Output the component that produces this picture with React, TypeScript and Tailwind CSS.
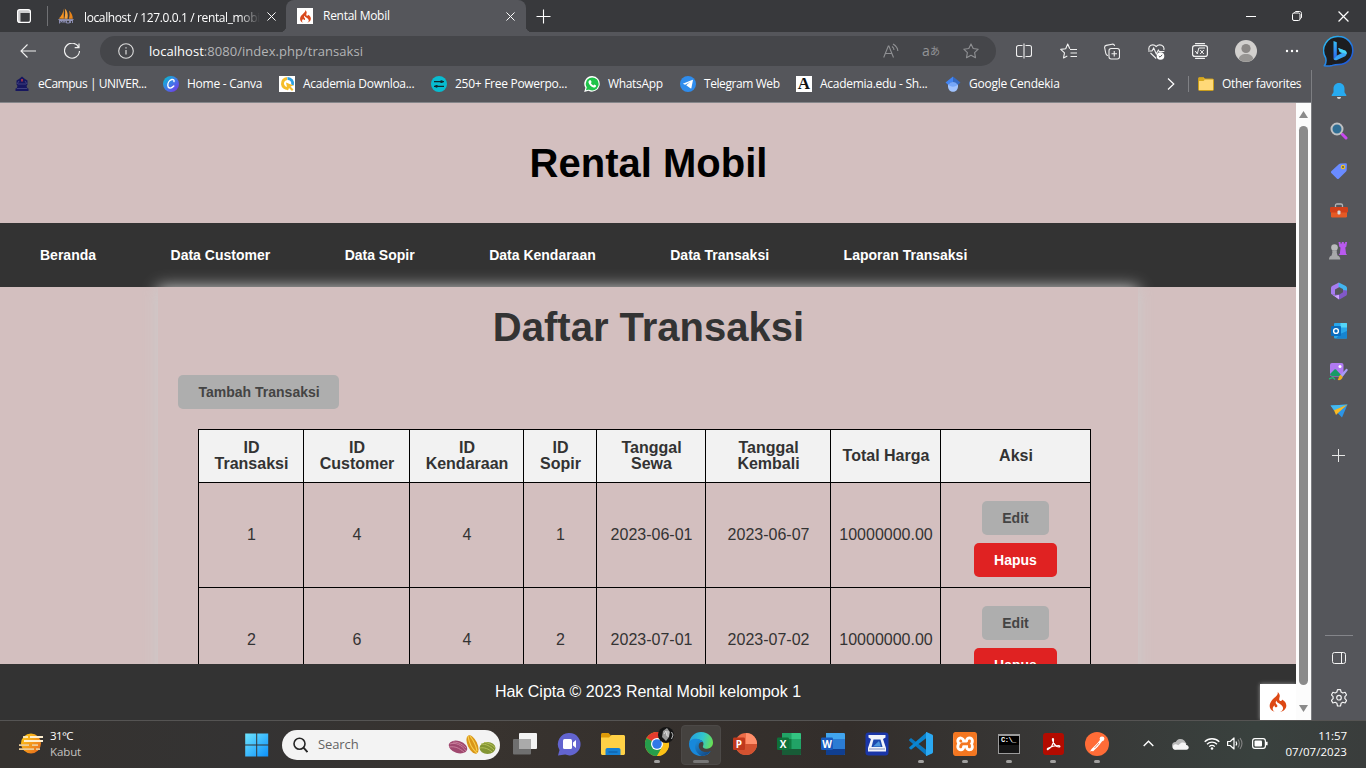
import React from "react";
import { SiCodeigniter, SiXampp } from "react-icons/si";

type SvgProps = { w?: number; h?: number; box?: string; className?: string; children: React.ReactNode };

function Svg({ w = 20, h, box, className = "", children }: SvgProps) {
  const hh = h ?? w;
  return (
    <svg width={w} height={hh} viewBox={box ?? `0 0 ${w} ${hh}`} fill="none" className={`block shrink-0 ${className}`}>
      {children}
    </svg>
  );
}

function CloseIcon({ size = 9 }: { size?: number }) {
  return (
    <Svg w={size} box="0 0 10 10">
      <path d="M.5.5l9 9M9.5.5l-9 9" stroke="#fff" strokeWidth="1.1" />
    </Svg>
  );
}

function PmaIcon() {
  return (
    <Svg w={16}>
      <path d="M5.800.500C5.500 4 3.500 8 .8 10.500l5 .2z" fill="#f6921e" />
      <path d="M6.800.500c2.700 2.500 3.500 6 2.700 10.200H6.300c.9-3 1.200-6.500.5-10.200z" fill="#f6a23c" />
      <path d="M11 2.500c2.500 2 3.700 5 3.800 8.200h-4c1-2.500 1-5.200.2-8.200z" fill="#e8841a" />
      <path d="M0 11.200h16l-1.600 1.600H1.500z" fill="#a4a6c8" />
      <path d="M1.500 15.500v-3h2v1.500h-2M5 15v-2.500l1 1.200 1-1.200V15M8.500 12.500v2.500h3v-2.500M12.500 15v-2.500h2V15" stroke="#9a9cc8" strokeWidth=".8" />
    </Svg>
  );
}

/* ------------------------------ tab strip ------------------------------ */

function TabStrip() {
  return (
    <div className="flex h-8 shrink-0 items-stretch bg-[#38393c] text-white">
      <div className="flex w-[47px] items-center justify-center">
        <Svg w={14} h={14}>
          <rect x=".6" y=".6" width="12.800" height="12.800" rx="2.200" stroke="#fff" strokeWidth="1.200" />
          <path d="M1 1h12v3H1zM1 4h2.500v9H1z" fill="#fff" fillOpacity=".75" />
        </Svg>
      </div>
      <div className="my-[6px] w-px bg-[#707174]" />
      <div className="flex w-[238px] items-center pl-[10px]">
        <PmaIcon />
        <div className="ml-[10px] w-[176px] overflow-hidden whitespace-nowrap [mask-image:linear-gradient(to_right,black_88%,transparent)]">
          <span className="text-[12px] tracking-[-0.38px]">localhost / 127.0.0.1 / rental_mobil</span>
        </div>
        <div className="ml-[7px]"><CloseIcon /></div>
      </div>
      <div className="relative flex w-[240px] items-center rounded-t-[8px] bg-[#55565b] pl-[11px]">
        <div className="flex size-4 items-center justify-center bg-white">
          <SiCodeigniter size={13} color="#d9481c" />
        </div>
        <span className="ml-[10px] flex-1 text-[12px] tracking-[-0.28px]">Rental Mobil</span>
        <div className="mr-[11px]"><CloseIcon /></div>
        <div className="absolute bottom-0 -left-[6px] size-[6px] bg-[radial-gradient(circle_at_0_0,transparent_6px,#55565b_6.5px)]" />
        <div className="absolute bottom-0 -right-[6px] size-[6px] bg-[radial-gradient(circle_at_100%_0,transparent_6px,#55565b_6.5px)]" />
      </div>
      <div className="ml-[10px] flex items-center">
        <Svg w={15}><path d="M7.500.500v14M.500 7.500h14" stroke="#fff" strokeWidth="1.100" /></Svg>
      </div>
      <div className="ml-auto flex">
        <div className="flex w-[46px] items-center justify-center"><Svg w={10}><path d="M0 5.500h10" stroke="#fff" /></Svg></div>
        <div className="flex w-[46px] items-center justify-center">
          <Svg w={10}>
            <rect x=".5" y="2" width="7.500" height="7.500" rx="1.500" stroke="#fff" />
            <path d="M2.500 2C2.600 1 3.200.500 4 .500h3.500c1.300 0 2 .700 2 2V6c0 .900-.500 1.400-1.300 1.500" stroke="#fff" />
          </Svg>
        </div>
        <div className="flex w-[46px] items-center justify-center"><CloseIcon size={11} /></div>
      </div>
    </div>
  );
}

/* ------------------------------- toolbar ------------------------------- */

const STAR = "M8 .900l2.200 4.600 5 .700-3.600 3.500.900 5L8 12.300l-4.500 2.400.900-5L.800 6.200l5-.700z";

function Toolbar() {
  return (
    <div className="flex h-[38px] shrink-0 items-center text-white">
      <div className="flex w-14 justify-center">
        <Svg w={16}><path d="M16 8H1M7.500 1.500L1 8l6.500 6.500" stroke="#f0f0f0" strokeWidth="1.100" /></Svg>
      </div>
      <div className="flex w-8 justify-center">
        <Svg w={16}><path d="M14.800 4.500A7.500 7.500 0 1 0 15.500 8M15 .500v4.200h-4.300" stroke="#f0f0f0" strokeWidth="1.200" /></Svg>
      </div>
      <div className="ml-3 flex h-[30px] w-[896px] items-center rounded-full bg-[#45464a] pr-[5px] pl-[18px]">
        <Svg w={16}>
          <circle cx="8" cy="8" r="7.300" stroke="#dcdcdc" strokeWidth="1.100" />
          <path d="M8 7v4.500M8 4.200v1.400" stroke="#dcdcdc" strokeWidth="1.200" />
        </Svg>
        <span className="ml-[15px] flex-1 pt-px text-[13px] tracking-[0.04px] text-[#b4b5b7]">
          <span className="text-white">localhost</span>:8080/index.php/transaksi
        </span>
        <div className="flex w-10 justify-center">
          <Svg w={16}>
            <path d="M.700 14.500L5.300 3h.600l4.600 11.500M2.300 10.500h6.600" stroke="#8f9093" strokeWidth="1.100" />
            <path d="M9 3.500c1.300.800 2 2 2 3.500M10 1c2.500 1.500 4.800 3.500 4.800 7" stroke="#8f9093" strokeWidth="1.100" />
          </Svg>
        </div>
        <div className="flex w-10 justify-center text-[12px] leading-4 text-[#939497]">
          <span className="text-[14px]">a</span><span className="font-['Noto_Sans_CJK_JP',sans-serif] text-[10px]">あ</span>
        </div>
        <div className="flex w-10 justify-center"><Svg w={16}><path d={STAR} stroke="#8f9093" strokeWidth="1.100" strokeLinejoin="round" /></Svg></div>
      </div>
      <div className="ml-[6px] flex [&>div]:flex [&>div]:h-6 [&>div]:w-11 [&>div]:items-center [&>div]:justify-center">
        <div>
          <Svg w={16}>
            <path d="M6.500 2.500h-4a2 2 0 0 0-2 2v7a2 2 0 0 0 2 2h4M9.500 2.500h4a2 2 0 0 1 2 2v7a2 2 0 0 1-2 2h-4M8 .500v15" stroke="#f0f0f0" strokeWidth="1.100" />
          </Svg>
        </div>
        <div>
          <Svg w={17} h={16}>
            <path d="M9.800 5.800L7.700 1 5.700 5.700l-5 .700 3.800 3.500-1 5 3.800-2M10 6.500h7M10.500 10h6.500M10.500 13.500h6.500" stroke="#f0f0f0" strokeWidth="1.100" strokeLinejoin="round" />
          </Svg>
        </div>
        <div>
          <Svg w={16} h={17}>
            <path d="M4 12.500C2.500 12.500 2 11.500 1.700 10L.700 5c-.300-1.500.300-2.300 1.600-2.600L8 1.200c1.500-.300 2.300.300 2.600 1.600" stroke="#f0f0f0" strokeWidth="1.100" />
            <rect x="5" y="5.500" width="10.500" height="10.500" rx="2.200" stroke="#f0f0f0" strokeWidth="1.100" />
            <path d="M10.250 8v5.500M7.500 10.750h5.500" stroke="#f0f0f0" strokeWidth="1.100" />
          </Svg>
        </div>
        <div>
          <Svg w={17} h={17}>
            <path d="M1 7C-.200 2.500 5 .200 8.200 3.500 11.500.200 17 2.500 15.800 7M2.500 10l5.700 5.500" stroke="#f0f0f0" strokeWidth="1.100" />
            <path d="M0 8h4l1.700-3 2.600 6 2-4 1 1.500h5" stroke="#f0f0f0" strokeWidth="1.100" />
            <circle cx="12.500" cy="13" r="3.800" fill="#fff" />
            <path d="M10.800 13l1.200 1.200 2.200-2.400" stroke="#55565b" strokeWidth="1" />
          </Svg>
        </div>
        <div>
          <Svg w={16}>
            <path d="M3.500.700h9M3.500 15.300h9" stroke="#f0f0f0" strokeWidth="1.200" strokeLinecap="round" />
            <rect x=".6" y="2.600" width="14.800" height="10.800" rx="2.200" stroke="#f0f0f0" strokeWidth="1.200" />
            <path d="M3 8.500l1 .2 1.300 2.300L6.800 5H13M8.200 7l3.600 4M11.800 7l-3.600 4" stroke="#f0f0f0" />
          </Svg>
        </div>
        <div className="pl-[3px]">
          <Svg w={22}>
            <circle cx="11" cy="11" r="11" fill="#d2d0ce" />
            <circle cx="11" cy="8.500" r="4.600" fill="#8b8886" />
            <path d="M3.800 19c.300-3 3-5 7.200-5s6.900 2 7.200 5C14 22.800 8 22.800 3.800 19z" fill="#979593" />
          </Svg>
        </div>
        <div className="pl-[8px]">
          <Svg w={14} h={4}><circle cx="2" cy="2" r="1.200" fill="#fff" /><circle cx="7" cy="2" r="1.200" fill="#fff" /><circle cx="12" cy="2" r="1.200" fill="#fff" /></Svg>
        </div>
      </div>
    </div>
  );
}

/* ---------------------------- favorites bar ---------------------------- */

const favorites: { label: string; box: string; track: string; icon: React.ReactNode }[] = [
  {
    label: "eCampus | UNIVER...", box: "w-[149px]", track: "tracking-[-0.46px]",
    icon: (
      <Svg w={16}>
        <path d="M8 .5l3 2.500 2.500 1.500v4l-1 1.500 1 2.500h1V15h-13v-2.500h1l1-2.500-1-1.500v-4L5 3z" fill="#17175f" />
        <path d="M4 8h8M3 12.500h10M5 5l-2 3M11 5l2 3" stroke="#4b4c86" strokeWidth=".8" />
        <path d="M8 3v2.500" stroke="#c23b45" strokeWidth="1.500" />
      </Svg>
    ),
  },
  {
    label: "Home - Canva", box: "w-[116px]", track: "tracking-[-0.26px]",
    icon: (
      <Svg w={16}>
        <defs><linearGradient id="cv" x1="0" y1="0" x2="1" y2="1"><stop stopColor="#00c4cc" /><stop offset=".5" stopColor="#3f7be8" /><stop offset="1" stopColor="#7d2ae8" /></linearGradient></defs>
        <circle cx="8" cy="8" r="8" fill="url(#cv)" />
        <path d="M11 5.600c.4-1.600-.8-2.400-2.200-2.100C6.300 4.100 4.700 7 4.800 9.500c.1 2.900 3 3.700 6 .6" stroke="#fff" strokeWidth="1.400" strokeLinecap="round" />
      </Svg>
    ),
  },
  {
    label: "Academia Downloa...", box: "w-[152px]", track: "tracking-[-0.3px]",
    icon: (
      <Svg w={16}>
        <path d="M0 0h16v16H0z" fill="#fff" />
        <path d="M9 12.500A5 5 0 1 1 8 2.500" stroke="#f5bd2a" strokeWidth="3" />
        <path d="M8.500 2.500a5 5 0 0 1 5 6.500" stroke="#2a9fe0" strokeWidth="2.800" />
        <path d="M7 6.500l7.500 3-3 1 3 3-1.500 1.500-3-3-1.200 2.700z" fill="#f5bd2a" />
      </Svg>
    ),
  },
  {
    label: "250+ Free Powerpo...", box: "w-[153px]", track: "tracking-[-0.28px]",
    icon: (
      <Svg w={16}>
        <circle cx="8" cy="8" r="8" fill="#08bcd0" />
        <path d="M3 5.700h10M3 10.300h10" stroke="#10282c" strokeWidth="1.300" />
        <circle cx="10.500" cy="5.700" r="1.400" fill="#10282c" /><circle cx="5.500" cy="10.300" r="1.400" fill="#10282c" />
      </Svg>
    ),
  },
  {
    label: "WhatsApp", box: "w-[96px]", track: "tracking-[-0.33px]",
    icon: (
      <Svg w={16}>
        <path d="M8.200 0a7.800 7.800 0 1 1-3.700 14.800L.200 16l1.200-4.200A7.800 7.800 0 0 1 8.200 0z" fill="#fff" />
        <circle cx="8.200" cy="7.900" r="6.500" fill="#1fc34a" /><path d="M1.900 14.300l1-3.300 2.400 2.400z" fill="#1fc34a" />
        <path d="M5.700 4.200l1.100.1.800 1.800-.7 1.100c.6 1.100 1.400 1.800 2.500 2.300l.9-1 1.800.9c.1 1.600-1.300 2.300-2.600 2C7 10.800 5 8.700 4.500 6.500c-.2-1 .4-2 1.200-2.300z" fill="#fff" />
      </Svg>
    ),
  },
  {
    label: "Telegram Web", box: "w-[116px]", track: "tracking-[-0.42px]",
    icon: (
      <Svg w={16}>
        <circle cx="8" cy="8" r="8" fill="#2f8cec" />
        <path d="M2.800 7.800l9.300-3.900c.6-.2.900.1.800.7l-1.500 7.300c-.1.500-.5.700-1 .4L6.200 9.200l4.100-3.500-5.200 3z" fill="#fff" />
      </Svg>
    ),
  },
  {
    label: "Academia.edu - Sh...", box: "w-[149px]", track: "tracking-[-0.28px]",
    icon: (
      <div className="flex size-4 items-center justify-center bg-white font-['Liberation_Serif',serif] text-[17px] leading-4 font-bold text-[#111]">A</div>
    ),
  },
  {
    label: "Google Cendekia", box: "w-[120px]", track: "tracking-[-0.25px]",
    icon: (
      <Svg w={16}>
        <path d="M3 8h10v2.500c-.2 3.300-2.300 5.300-5 5.300s-4.800-2-5-5.300z" fill="#a0c3ff" />
        <path d="M8 .500L.500 6.500 3.300 9C4.300 7.200 6 6.300 8 6.300z" fill="#4285f4" />
        <path d="M8 .500l7.500 6L12.700 9C11.700 7.200 10 6.300 8 6.300z" fill="#356ac3" />
        <path d="M3.300 9a5.200 5.200 0 0 1 9.400 0 8 8 0 0 1-9.400 0z" fill="#76a7fa" />
      </Svg>
    ),
  },
];

function FavoritesBar() {
  return (
    <div className="flex h-[33px] shrink-0 items-center border-b border-[#85868a] pb-1 pl-[14px] text-[12px] whitespace-nowrap text-white">
      {favorites.map((f) => (
        <div key={f.label} className={`flex shrink-0 items-center gap-2 ${f.box}`}>
          {f.icon}
          <span className={f.track}>{f.label}</span>
        </div>
      ))}
      <div className="ml-auto flex items-center pr-[10px]">
        <Svg w={8} h={12}><path d="M1 .500L6.800 6 1 11.500" stroke="#fff" strokeWidth="1.200" /></Svg>
        <div className="ml-[13px] h-4 w-px bg-[#808185]" />
        <div className="ml-[9px]">
          <Svg w={16} h={14}>
            <path d="M.500 1.500C.500.900.900.500 1.500.500h4L7 2h7.500c.600 0 1 .400 1 1v9.500c0 .600-.400 1-1 1h-13c-.600 0-1-.400-1-1z" fill="#ffd978" stroke="#c99d1c" />
            <path d="M1 1h4.500L7 2.500 5.500 4H1z" fill="#d6a81f" />
          </Svg>
        </div>
        <span className="ml-2 w-[79px] tracking-[-0.34px]">Other favorites</span>
      </div>
    </div>
  );
}

/* -------------------------------- page --------------------------------- */

const menu = ["Beranda", "Data Customer", "Data Sopir", "Data Kendaraan", "Data Transaksi", "Laporan Transaksi"];
const columns = ["ID Transaksi", "ID Customer", "ID Kendaraan", "ID Sopir", "Tanggal Sewa", "Tanggal Kembali", "Total Harga", "Aksi"];
const widths = ["w-[105px]", "w-[106px]", "w-[114px]", "w-[73px]", "w-[109px]", "w-[125px]", "w-[110px]", "w-[150px]"];
const rows = [
  ["1", "4", "4", "1", "2023-06-01", "2023-06-07", "10000000.00"],
  ["2", "6", "4", "2", "2023-07-01", "2023-07-02", "10000000.00"],
];

const BTN = "rounded-[5px] py-[10px] text-[14px] leading-[14px] font-bold";

function WebPage() {
  return (
    <div className="relative h-full w-[1296px] overflow-hidden bg-[#d3bfbf] font-['Liberation_Sans',Arial,sans-serif] text-[#333]">
      <header className="py-10 text-center">
        <h1 className="pl-px text-[40px] leading-10 font-bold text-black">Rental Mobil</h1>
      </header>
      <nav className="flex h-16 items-center gap-[74.5px] bg-[#333] pl-10 text-[14px] font-bold whitespace-nowrap text-white">
        {menu.map((m) => <a key={m}>{m}</a>)}
      </nav>
      <main className="mx-auto w-[980px] p-5 shadow-[0_0_15px_#ccc]">
        <h1 className="pl-px text-center text-[40px] leading-10 font-bold">Daftar Transaksi</h1>
        <button className={`mt-7 block bg-[#aeaeae] pr-[19.5px] pl-[20.5px] text-[#444] ${BTN}`}>Tambah Transaksi</button>
        <table className="mt-5 ml-5 w-[893px] table-fixed border-collapse text-center text-[16px] leading-4">
          <colgroup>{widths.map((w, i) => <col key={i} className={w} />)}</colgroup>
          <thead>
            <tr className="h-[53px] bg-[#f2f2f2]">
              {columns.map((c) => <th key={c} className="border border-black py-[10px] pr-[7px] pl-2">{c}</th>)}
            </tr>
          </thead>
          <tbody>
            {rows.map((r) => (
              <tr key={r[0]} className="h-[105px]">
                {r.map((c, i) => <td key={i} className="border border-black pl-px">{c}</td>)}
                <td className="border border-black pt-2">
                  <div className="flex flex-col items-center gap-2">
                    <button className={`bg-[#aeaeae] px-5 text-[#444] ${BTN}`}>Edit</button>
                    <button className={`bg-[#e02222] px-5 text-white ${BTN}`}>Hapus</button>
                  </div>
                </td>
              </tr>
            ))}
          </tbody>
        </table>
      </main>
      <footer className="absolute inset-x-0 bottom-0 flex h-14 items-center justify-center bg-[#333] text-[16px] text-white">
        <p>Hak Cipta © 2023 Rental Mobil kelompok 1</p>
      </footer>
      <div className="absolute right-0 bottom-0 flex size-9 items-center justify-center bg-white shadow-[0_0_4px_#999]">
        <SiCodeigniter size={20} color="#dd4814" />
      </div>
    </div>
  );
}

function Scrollbar() {
  return (
    <div className="flex w-[15px] flex-col items-center bg-[#fcfcfc]">
      <Svg w={9} h={7} className="mt-2"><path d="M4.500 0L9 7H0z" fill="#8b8b8b" /></Svg>
      <div className="mt-2 h-[559px] w-[9px] rounded-full bg-[#8b8b8b]" />
      <Svg w={9} h={7} className="mt-[20px]"><path d="M4.500 7L9 0H0z" fill="#8b8b8b" /></Svg>
    </div>
  );
}

/* ------------------------------- sidebar ------------------------------- */

function Sidebar() {
  return (
    <aside className="flex w-[55px] shrink-0 flex-col bg-[#55565b]">
      <div className="flex h-[38px] items-center justify-center">
        <Svg w={31} h={32}>
          <defs>
            <linearGradient id="bg1" x1="0" y1="0" x2="1" y2="1"><stop stopColor="#2dc0f0" /><stop offset="1" stopColor="#1d4ad8" /></linearGradient>
            <linearGradient id="bg2" x1="0" y1="0" x2="0" y2="1"><stop stopColor="#37bdf5" /><stop offset="1" stopColor="#2a62f0" /></linearGradient>
          </defs>
          <path d="M15.800 1.500a14 14 0 0 1 0 28c-2.500 0-4 .200-6.500.900-2.500.500-5.500.700-8 .400 1.700-2 2.200-4.500 1.400-8A14 14 0 0 1 15.800 1.500z" fill="#1c1d20" stroke="url(#bg1)" strokeWidth="1.500" strokeLinejoin="round" />
          <path d="M10.500 6l3.300 1.300v14l-3.300 2.700z" fill="url(#bg2)" />
          <path d="M10.500 24l3.500-3.500 5-2.600-2.200-1-1.600-4 7.300 2.800c1.700 1.600 1.500 4.300-.3 5.500L14 25c-1.500.6-2.700.2-3.500-1z" fill="#39a4f5" />
          <path d="M15.200 12.900l7.300 2.800c1 1 1.400 2 1.100 3.300l-6.800-2.100z" fill="#48d5f5" />
        </Svg>
      </div>
      <div className="flex flex-1 flex-col items-center border-l border-[#7d7e82] pt-[1px] pr-px [&>div]:flex [&>div]:h-10 [&>div]:w-full [&>div]:shrink-0 [&>div]:items-center [&>div]:justify-center">
        <div>
          <Svg w={16} h={18}>
            <path d="M8 1c3.500 0 5.500 2.500 5.500 5.800v3.500l1.800 2.700c.2.600 0 1-.6 1H1.300c-.6 0-.8-.4-.6-1l1.800-2.700V6.800C2.500 3.500 4.500 1 8 1z" fill="#27aaf0" />
            <path d="M6 15h4c0 1.200-.800 2-2 2s-2-.800-2-2z" fill="#d8d8d8" />
          </Svg>
        </div>
        <div>
          <Svg w={18}>
            <path d="M12.300 12.300l3.700 3.700" stroke="#c948ef" strokeWidth="3" strokeLinecap="round" />
            <circle cx="7" cy="7" r="5.500" fill="#306e94" stroke="#bfc0c2" strokeWidth="2" />
          </Svg>
        </div>
        <div>
          <Svg w={18}>
            <path d="M10.500 1.500l5-.3c.9 0 1.400.5 1.400 1.400l-.2 5.500c0 .5-.3 1-.6 1.300L9 16.500c-.700.700-1.500.700-2.200 0L1.500 11.200c-.7-.700-.7-1.500 0-2.200l7.600-7z" fill="#6a8bff" />
            <circle cx="13" cy="5" r="1.600" fill="#555" stroke="#f3c321" strokeWidth="1.200" />
          </Svg>
        </div>
        <div>
          <Svg w={18} h={16}>
            <path d="M5.500 4V2.500C5.500 1.500 6 1 7 1h4c1 0 1.500.500 1.500 1.500V4" stroke="#b4b5b8" strokeWidth="1.300" />
            <rect x="1" y="8" width="16" height="6.500" rx="1.300" fill="#e65a25" />
            <rect x="0" y="4" width="18" height="5.500" rx="1.300" fill="#d2401a" />
            <rect x="7.500" y="7.500" width="3" height="4" rx="1" fill="#d7d9db" />
          </Svg>
        </div>
        <div>
          <Svg w={19} h={18}>
            <path d="M9.500 0h2v1.500h1.300V0h2v1.500h1.300V0h2l-.8 4.800-1 .8.700 5.900 1 1.500h-8.300l1.200-1.500.6-5.900-1.200-.8z" fill="#b95aef" />
            <circle cx="5.500" cy="5.500" r="3.300" fill="#b9babb" />
            <path d="M3 8.500h5v1H7.500l1 4c1.500.5 2.800 1.500 2.800 4H0c0-2.500 1.200-3.500 2.600-4l1-4H3z" fill="#a8a9aa" />
          </Svg>
        </div>
        <div>
          <Svg w={18}>
            <path d="M9 .5L2.500 3.800C1.500 4.400 1 5.300 1 6.300v5.500l4 2V7.500L9.500 5z" fill="#a77cf0" />
            <path d="M8.800.5l6.500 3.300c1.200.7 1.700 1.500 1.700 2.700v4.200l-4-2.200V7L8.500 4.700z" fill="#42b5f0" />
            <path d="M17 8.500v3.200c0 1-.5 1.800-1.500 2.400L9.500 17.500 2 12.600l7 .2 4-2.500V8z" fill="#8158c8" />
            <path d="M1 11.800l4 2 4-1v4.700z" fill="#cfa4ff" />
          </Svg>
        </div>
        <div>
          <Svg w={18}>
            <rect x="4" y="1" width="13" height="15.500" rx="1" fill="#29a7ea" />
            <path d="M10.500 1H16c.6 0 1 .400 1 1v3.500h-6.500z" fill="#54d5f8" />
            <path d="M10 12l7-3v7.500H6z" fill="#1684d1" />
            <rect x="1" y="4" width="10" height="10" rx="1" fill="#0a6cbd" />
            <circle cx="6" cy="9" r="2.400" stroke="#fff" strokeWidth="1.400" />
          </Svg>
        </div>
        <div>
          <Svg w={19} h={19}>
            <rect x="1" y="1" width="13.500" height="13.500" rx="2" fill="#b07af2" />
            <path d="M1 12l4.500-4.500c.5-.5 1-.5 1.500 0l6 6.500H3a2 2 0 0 1-2-2z" fill="#189a67" />
            <circle cx="11" cy="4.500" r="1.500" fill="#fff" />
            <path d="M11.500 13l5.500-6c1.200-.5 2 .5 1.500 1.500L13.500 15z" fill="#a89bf7" />
            <path d="M11.500 12.800l2.200 2.200c-.5 2.500-2.700 3.500-5 3 1.500-2.500 1-4 2.800-5.200z" fill="#f1ae21" />
            <path d="M0 17l4-1.500 2 2" stroke="#21bd77" strokeWidth="1.200" />
          </Svg>
        </div>
        <div>
          <Svg w={18} h={14}>
            <path d="M.5 1.500L17.500.500 12 13.500z" fill="#2c94e6" />
            <path d="M17.500.500L4 6.500 .500 1.500z" fill="#43b9ef" />
            <path d="M17.500.500L4 6.300 6 11l2-2z" fill="#f8b823" />
          </Svg>
        </div>
        <div className="mt-1">
          <Svg w={13}><path d="M6.500 0v13M0 6.500h13" stroke="#e7e7e7" /></Svg>
        </div>
        <hr className="mt-auto w-7 border-t border-[#84858a]" />
        <div className="mt-[2px]">
          <Svg w={14} h={12}><rect x=".5" y=".5" width="13" height="11" rx="2" stroke="#f3f3f3" /><path d="M9.500.500v11" stroke="#f3f3f3" /></Svg>
        </div>
        <div className="mb-[2px]">
          <Svg w={16} h={18}>
            <path d="M6.500.700h3l.6 2.300 1.700 1 2.300-.7 1.500 2.600-1.700 1.700v2.100l1.700 1.700-1.500 2.600-2.300-.7-1.700 1-.6 2.700h-3l-.6-2.700-1.700-1-2.300.7L.400 11.400l1.700-1.700V7.600L.400 5.900l1.500-2.600 2.300.7 1.700-1z" stroke="#f3f3f3" strokeWidth="1.200" strokeLinejoin="round" />
            <circle cx="8" cy="8.700" r="2.300" stroke="#f3f3f3" strokeWidth="1.200" />
          </Svg>
        </div>
      </div>
    </aside>
  );
}

/* ------------------------------- taskbar ------------------------------- */

function Office({ letter, tile, light, mid, dark }: { letter: string; tile: string; light: string; mid: string; dark: string }) {
  return (
    <div className="relative">
      <Svg w={24} h={22}>
        <rect x="5" y="0" width="19" height="22" rx="1.500" fill={mid} />
        <path d="M5 0h17.500c.8 0 1.500.7 1.500 1.500V6H5z" fill={light} />
        <path d="M5 16h19v4.500c0 .8-.7 1.500-1.500 1.500H5z" fill={dark} />
        {letter === "X" && <path d="M14.500 0h8c.8 0 1.500.700 1.500 1.500V6h-9.500z" fill="#33c481" />}
        {letter === "X" && <path d="M5 6h9.500v10H5z" fill="#107c41" />}
        <rect x="0" y="4.500" width="12" height="12.500" rx="1.200" fill={tile} />
      </Svg>
      <span className="absolute top-[5px] left-0 w-3 text-center text-[10px] leading-3 font-bold text-white">{letter}</span>
    </div>
  );
}

const apps: { id: string; run?: boolean; active?: boolean; icon: React.ReactNode }[] = [
  {
    id: "taskview",
    icon: (
      <Svg w={24} h={22}>
        <rect x="6" y="0" width="18" height="16" rx="1" fill="#f3f3f3" />
        <rect x="0" y="6" width="18" height="15.500" rx="1" fill="#6f6f6f" />
        <path d="M6 6h12v10H6z" fill="#aaa" />
      </Svg>
    ),
  },
  {
    id: "chat",
    icon: (
      <Svg w={24} h={23}>
        <path d="M12.500 0a11.200 11.200 0 1 1-4.300 21.600L1 22.500l1.500-5.500A11.200 11.200 0 0 1 12.500 0z" fill="#6264cf" />
        <rect x="6" y="6" width="9" height="10" rx="1.500" fill="#fff" /><path d="M16 9.500L19 7v8l-3-2.500z" fill="#fff" />
      </Svg>
    ),
  },
  {
    id: "files",
    icon: (
      <Svg w={24} h={22}>
        <path d="M0 1.500C0 .7.700 0 1.500 0h6L10 2.500V8H0z" fill="#dd9a09" />
        <path d="M0 4.500h8L10.500 2H22.500c.8 0 1.500.700 1.500 1.500v17c0 .8-.7 1.500-1.500 1.500h-21C.700 22 0 21.300 0 20.500z" fill="#ffd146" />
        <path d="M4.500 22v-5c0-1.300.700-2 2-2h11c1.300 0 2 .7 2 2v5z" fill="#1580d3" />
        <path d="M7.500 18.500h9v1h-9z" fill="#0c569c" />
      </Svg>
    ),
  },
  {
    id: "chrome", run: true,
    icon: (
      <div className="relative">
        <Svg w={24}>
          <circle cx="12" cy="12" r="12" fill="#fbc116" />
          <path d="M12 12L1.600 6A12 12 0 0 1 22.400 6z" fill="#e33b2e" />
          <path d="M12 12L1.600 6A12 12 0 0 0 12 24l6-9z" fill="#269d4b" />
          <path d="M12 12V6h10.400A12 12 0 0 1 12 24l5-9z" fill="#fbc116" />
          <circle cx="12" cy="12" r="6" fill="#fff" /><circle cx="12" cy="12" r="4.800" fill="#3079e8" />
        </Svg>
        <Svg w={16} className="absolute -top-[5px] left-[13px]">
          <circle cx="8" cy="8" r="8" fill="#151515" />
          <path d="M4 10l1-6 4-3 3 4-1 5-3 4z" fill="#999" /><path d="M6 7l2-3 1 5M10 4v6" stroke="#ddd" /><path d="M13.500 5l1.500 3-1.500 4" stroke="#bbb" />
        </Svg>
      </div>
    ),
  },
  {
    id: "edge", active: true,
    icon: (
      <Svg w={24}>
        <defs>
          <linearGradient id="e1" x1="0" y1=".3" x2="1" y2=".5"><stop stopColor="#249fe0" /><stop offset=".55" stopColor="#31c5ce" /><stop offset="1" stopColor="#68df55" /></linearGradient>
          <linearGradient id="e2" x1="0" y1="0" x2="1" y2="1"><stop stopColor="#1c8edb" /><stop offset="1" stopColor="#123f78" /></linearGradient>
        </defs>
        <path d="M.2 10.500C1.200 4.500 6 0 12 0c7.500 0 12 5.500 12 10.500 0 4-3 6.200-6 6.200-3.500 0-4.500-1.500-4-2.700 1-1.700.8-5.500-3.600-6.300C6 6.800 1.500 8 .2 10.500z" fill="url(#e1)" />
        <path d="M0 12c0-4 4.500-6 9-5 2.500.500 4.500 1.500 5.300 3.500-3-1.500-6 1-6 4.500 0 5.500 7 8.300 13.200 4.200-.5 2-4.500 4.800-9.500 4.800C5 24 0 18.500 0 12z" fill="#1788da" />
        <path d="M9 8.500c-5.500 4-3 13 3.500 15.400 4 0 7.500-2.200 9.300-5-6 3-13-.5-12-6 .300-1.700 1.200-2.700 2.700-3.200z" fill="url(#e2)" />
      </Svg>
    ),
  },
  {
    id: "powerpoint",
    icon: (
      <div className="relative">
        <Svg w={24} h={22}>
          <circle cx="13" cy="11" r="11" fill="#ed6c47" /><path d="M13 0a11 11 0 0 1 11 11H13z" fill="#ff8f6b" />
          <path d="M2 11h22a11 11 0 0 1-22 0z" fill="#d35230" />
          <rect x="0" y="4.500" width="12" height="12.500" rx="1.200" fill="#c0391d" />
        </Svg>
        <span className="absolute top-[5px] left-0 w-3 text-center text-[10px] leading-3 font-bold text-white">P</span>
      </div>
    ),
  },
  { id: "excel", icon: <Office letter="X" tile="#0f7039" light="#21a366" mid="#21a366" dark="#185c37" /> },
  { id: "word", icon: <Office letter="W" tile="#185abd" light="#41a5ee" mid="#2b7cd3" dark="#103f91" /> },
  {
    id: "scanner",
    icon: (
      <Svg w={24}>
        <rect x=".5" y=".5" width="23" height="23" rx="3" fill="#1a36a8" />
        <path d="M3.500 3h17v2.500l-2.500 1.500 3 9v3.500H3v-3.500L6 7 3.500 5.500z" fill="#f1f4fb" />
        <path d="M8.500 7.500h7l2 7.500h-11z" fill="#1d49ae" /><path d="M14 9l2 5.500H8z" fill="#4b95dd" />
        <path d="M4 17h16" stroke="#8190bd" />
      </Svg>
    ),
  },
  {
    id: "code", run: true,
    icon: (
      <Svg w={24}>
        <path d="M0 7.800l2-1.800 16 12.500V24L.300 8.800z" fill="#0a78c0" />
        <path d="M0 16l2 1.800L18 5.500V0L.300 15.200z" fill="#0b86d1" />
        <path d="M17.500 0L23 2.500c.6.300 1 .800 1 1.500v16c0 .700-.4 1.200-1 1.500L17.500 24c-.5 0-.5-.5-.5-1V1c0-.500 0-1 .5-1z" fill="#2ba9f2" />
      </Svg>
    ),
  },
  {
    id: "xampp", run: true,
    icon: (
      <div className="rounded-[5px] bg-white">
        <SiXampp size={24} color="#f47721" className="block" />
      </div>
    ),
  },
  {
    id: "cmd", run: true,
    icon: (
      <div className="relative h-[20px] w-[22px] border border-t-2 border-[#9b9b9b] bg-black">
        <span className="absolute top-0 left-[2px] font-['Liberation_Mono',monospace] text-[7px] leading-[9px] font-bold tracking-[-0.5px] text-white">C:\_</span>
        <div className="absolute inset-x-0 bottom-0 h-[8px] bg-[#161616]" />
      </div>
    ),
  },
  {
    id: "acrobat", run: true,
    icon: (
      <Svg w={21} h={22}>
        <rect width="21" height="22" rx="3" fill="#b30b00" />
        <path d="M5 16.500c3-1.500 6-6 5.500-10 0-1.500-1.500-1-1 .500C10.500 11 13 13.500 16 14c1.500 0 1-1.500-.5-1.500-4 0-7.500 1-10.500 2.700-1.200.800-.6 1.800 0 1.300z" stroke="#fff" strokeWidth="1.200" />
      </Svg>
    ),
  },
  {
    id: "postman", run: true,
    icon: (
      <Svg w={24}>
        <circle cx="12" cy="12" r="12" fill="#ff6c37" />
        <path d="M13 12.500l3.500-4.500M7 18.500l6-6" stroke="#fff" strokeWidth="2.600" />
        <circle cx="17" cy="6.800" r="2.400" fill="#fff" />
        <path d="M4.500 19.500l7-6.500 1.500 1.500-6 4.500z" fill="#fff" />
        <path d="M9.500 16l4.500-5" stroke="#d9623a" strokeWidth=".7" />
      </Svg>
    ),
  },
];

function Taskbar() {
  return (
    <div className="flex h-12 shrink-0 items-center border-t border-[#555453] bg-[linear-gradient(90deg,#35322f_0%,#343333_18%,#38332f_35%,#332e2b_62%,#383837_78%,#39413e_92%,#3a3d3c_100%)] text-white">
      <div className="flex w-[245px] items-center pb-[2px] pl-[19px]">
        <Svg w={24} h={21}>
          <defs><linearGradient id="sun" x1="0" y1="0" x2="1" y2="1"><stop stopColor="#ffd21a" /><stop offset="1" stopColor="#e8641c" /></linearGradient></defs>
          <circle cx="12" cy="10.500" r="10" fill="url(#sun)" />
          <path d="M11 4h13M5 8h19" stroke="#fff0d0" strokeWidth="1.800" /><path d="M4 4h5" stroke="#fff0d0" strokeWidth="1.600" />
          <path d="M0 12.200h10M13 12.200h6M0 16.200h15M17 16.200h4" stroke="#eccb96" strokeWidth="1.800" />
        </Svg>
        <div className="ml-[7px] text-[11.500px] leading-4">
          <div className="tracking-[-0.6px]">31°C</div>
          <div className="tracking-[-0.1px] text-[#c4c2c0]">Kabut</div>
        </div>
      </div>
      <Svg w={24}>
        <defs><linearGradient id="win" gradientUnits="userSpaceOnUse" x1="0" y1="0" x2="24" y2="24"><stop stopColor="#6fe6ff" /><stop offset="1" stopColor="#0a8efb" /></linearGradient></defs>
        <path d="M.2.500h11v11H.200zM12.200.500h11v11h-11zM.200 12.500h11v11H.200zM12.200 12.500h11v11h-11z" fill="url(#win)" />
      </Svg>
      <div className="ml-[13px] flex h-[30px] w-[218px] items-center rounded-full bg-[#f3f3f3] pr-1 pl-[11px]">
        <Svg w={15} h={16}><circle cx="6.500" cy="6.700" r="5.500" stroke="#262626" strokeWidth="1.600" /><path d="M10.500 10.700l4 4.300" stroke="#262626" strokeWidth="1.900" /></Svg>
        <span className="ml-[10px] flex-1 text-[13px] tracking-[-0.1px] text-[#636363]">Search</span>
        <Svg w={48} h={22}>
          <ellipse cx="10" cy="13" rx="9.500" ry="6" transform="rotate(18 10 13)" fill="#a0486f" />
          <path d="M2 10c5-2 12 1 16 7M1 13c6-1 10 1 15 5M5 8c6 0 10 3 13 6" stroke="#c97f9c" />
          <ellipse cx="24.500" cy="10.500" rx="4.800" ry="10" transform="rotate(-25 24.500 10.500)" fill="#d99518" />
          <path d="M20 2c1 7 4 13 9 17M22 2c3 4 6 9 7 15" stroke="#f6cf4d" strokeWidth="1.200" />
          <ellipse cx="39.500" cy="14" rx="8" ry="6" fill="#839534" />
          <path d="M33 10c5 0 9 2 13 6M32 14c4-1 9 1 12 4M36 8.500c4 0 8 2 11 5" stroke="#b5c15a" />
        </Svg>
      </div>
      <div className="ml-[3px] flex">
        {apps.map((a) => (
          <div key={a.id} className="relative flex h-10 w-11 items-center justify-center pb-px">
            {a.active && <div className="absolute inset-x-[2px] inset-y-0 rounded-[4px] border border-[#4c4947] bg-[#45423f]" />}
            <div className="relative">{a.icon}</div>
            {a.active && <div className="absolute bottom-[2px] left-[14px] h-[3px] w-4 rounded-full bg-[#777]" />}
            {a.run && <div className="absolute bottom-[2px] left-[19px] h-[3px] w-[6px] rounded-full bg-[#a1a09f]" />}
          </div>
        ))}
      </div>
      <div className="ml-auto flex items-center pr-[19px] pb-[2px]">
        <Svg w={11} h={7}><path d="M.700 6L5.500 1.200 10.300 6" stroke="#fff" strokeWidth="1.400" /></Svg>
        <Svg w={17} h={12} className="ml-[18px]">
          <path d="M4 11.500A3.700 3.700 0 0 1 3.700 4 5.200 5.200 0 0 1 12.500 2.800l2 3z" fill="#b9b9b9" />
          <path d="M3 11.800a2.800 2.800 0 0 1 .2-5.500c1-.1 2 .2 3 1l3-2.500c3-.8 4.800.5 5.100 2.200 3.300.4 3.200 4.800 0 4.800z" fill="#f5f5f5" />
        </Svg>
        <Svg w={16} h={13} className="ml-[15px]">
          <path d="M.700 4.800a10.300 10.300 0 0 1 14.600 0M3 7.300a7 7 0 0 1 10 0M5.200 9.600a4 4 0 0 1 5.600 0" stroke="#fff" strokeWidth="1.300" />
          <circle cx="8" cy="11.500" r="1.300" fill="#fff" />
        </Svg>
        <Svg w={16} h={13} className="ml-[7px]">
          <path d="M.6 4.500h2.600L7 1v11L3.200 8.500H.6z" stroke="#fff" strokeWidth="1.200" strokeLinejoin="round" />
          <path d="M9 4.500c.8 1.300.8 2.700 0 4" stroke="#fff" strokeWidth="1.200" /><path d="M11 2.500c1.700 2.500 1.700 5.500 0 8M13 1c2.500 3.500 2.500 7.500 0 11" stroke="#858585" strokeWidth="1.100" />
        </Svg>
        <Svg w={16} h={11} className="ml-[9px]">
          <rect x=".6" y=".6" width="12.800" height="9.800" rx="2.300" stroke="#fff" strokeWidth="1.200" />
          <rect x="2.500" y="2.500" width="7.500" height="6" rx="1" fill="#fff" /><path d="M14.800 3.800v3.500" stroke="#fff" strokeWidth="1.600" />
        </Svg>
        <div className="ml-[16px] w-[63px] text-right text-[11.500px] leading-4 whitespace-nowrap">
          <div className="tracking-[-0.1px]">11:57</div>
          <div className="tracking-[0.05px]">07/07/2023</div>
        </div>
      </div>
    </div>
  );
}

export default function App() {
  return (
    <div className="flex h-[768px] w-[1366px] flex-col overflow-hidden bg-[#55565b] font-['Open_Sans','Noto_Sans',sans-serif]">
      <TabStrip />
      <div className="flex h-[688px] shrink-0">
        <div className="flex w-[1311px] flex-col">
          <Toolbar />
          <FavoritesBar />
          <div className="flex min-h-0 flex-1">
            <WebPage />
            <Scrollbar />
          </div>
        </div>
        <Sidebar />
      </div>
      <Taskbar />
    </div>
  );
}
